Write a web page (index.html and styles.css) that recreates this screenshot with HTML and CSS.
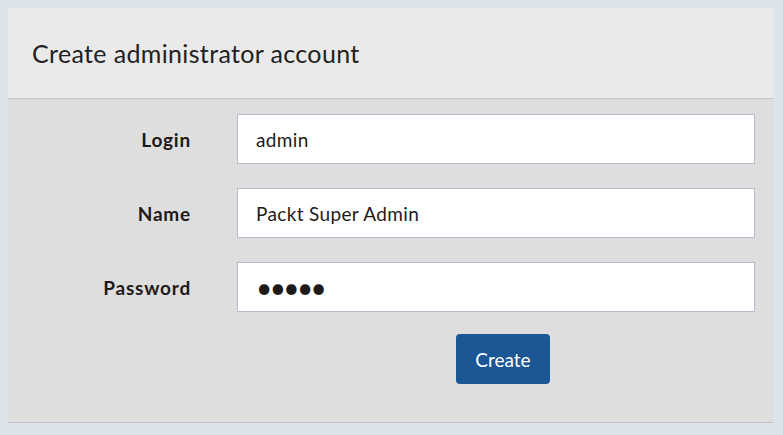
FILE: index.html
```html
<!DOCTYPE html>
<html lang="en">
<head>
<meta charset="utf-8">
<title>Create administrator account</title>
<link rel="stylesheet" href="styles.css">
</head>
<body>
<div class="panel">
  <div class="panel-header">
    <h1 class="panel-title">Create administrator account</h1>
  </div>
  <form class="panel-body">
    <div class="form-row">
      <label class="form-label" for="login">Login</label>
      <input class="form-input" id="login" type="text" value="admin">
    </div>
    <div class="form-row">
      <label class="form-label" for="name">Name</label>
      <input class="form-input" id="name" type="text" value="Packt Super Admin">
    </div>
    <div class="form-row">
      <label class="form-label" for="password">Password</label>
      <input class="form-input form-input-password" id="password" type="password" value="admin">
    </div>
    <div class="form-actions">
      <button class="btn-primary" type="button">Create</button>
    </div>
  </form>
</div>
</body>
</html>
```

FILE: styles.css
```css
html, body {
  margin: 0;
  padding: 0;
}
body {
  background: #dce3eb;
  font-family: "Lato", "Liberation Sans", sans-serif;
  color: #222222;
  height: 435px;
  overflow: hidden;
}
.panel {
  margin: 8px 10px 0 8px;
  width: 765px;
}
.panel-header {
  height: 90px;
  background: #eaeaea;
  border-bottom: 1px solid #c2c6d4;
  display: flex;
  align-items: center;
  padding-left: 24px;
}
.panel-title {
  margin: 0;
  font-size: 25px;
  font-weight: 400;
  letter-spacing: 0.35px;
  color: #222222;
}
.panel-body {
  margin: 0;
  background: #dedede;
  padding: 15px 0 38px 0;
  border-bottom: 1px dotted #a9adb8;
  display: flex;
  flex-direction: column;
  gap: 24px;
}
.form-row {
  display: grid;
  grid-template-columns: 183px 518px;
  column-gap: 46px;
  align-items: center;
}
.form-label {
  text-align: right;
  font-size: 19px;
  font-weight: 700;
  letter-spacing: 0.8px;
  color: #1f1a1a;
}
.form-input {
  box-sizing: border-box;
  height: 50px;
  width: 518px;
  margin: 0;
  border: 1px solid #b6bccb;
  border-radius: 0;
  background: #ffffff;
  padding: 0 18px;
  font-family: "Lato", "Liberation Sans", sans-serif;
  font-size: 19px;
  letter-spacing: 0.35px;
  color: #1f1a1a;
  outline: none;
}
.form-input-password {
  font-size: 28px;
  letter-spacing: -2.6px;
}
.form-actions {
  padding-left: 448px;
  margin-top: -2px;
}
.btn-primary {
  width: 94px;
  height: 50px;
  border: none;
  border-radius: 4px;
  background: #1a5794;
  color: #ffffff;
  font-family: "Lato", "Liberation Sans", sans-serif;
  font-size: 19px;
  cursor: pointer;
}
```
